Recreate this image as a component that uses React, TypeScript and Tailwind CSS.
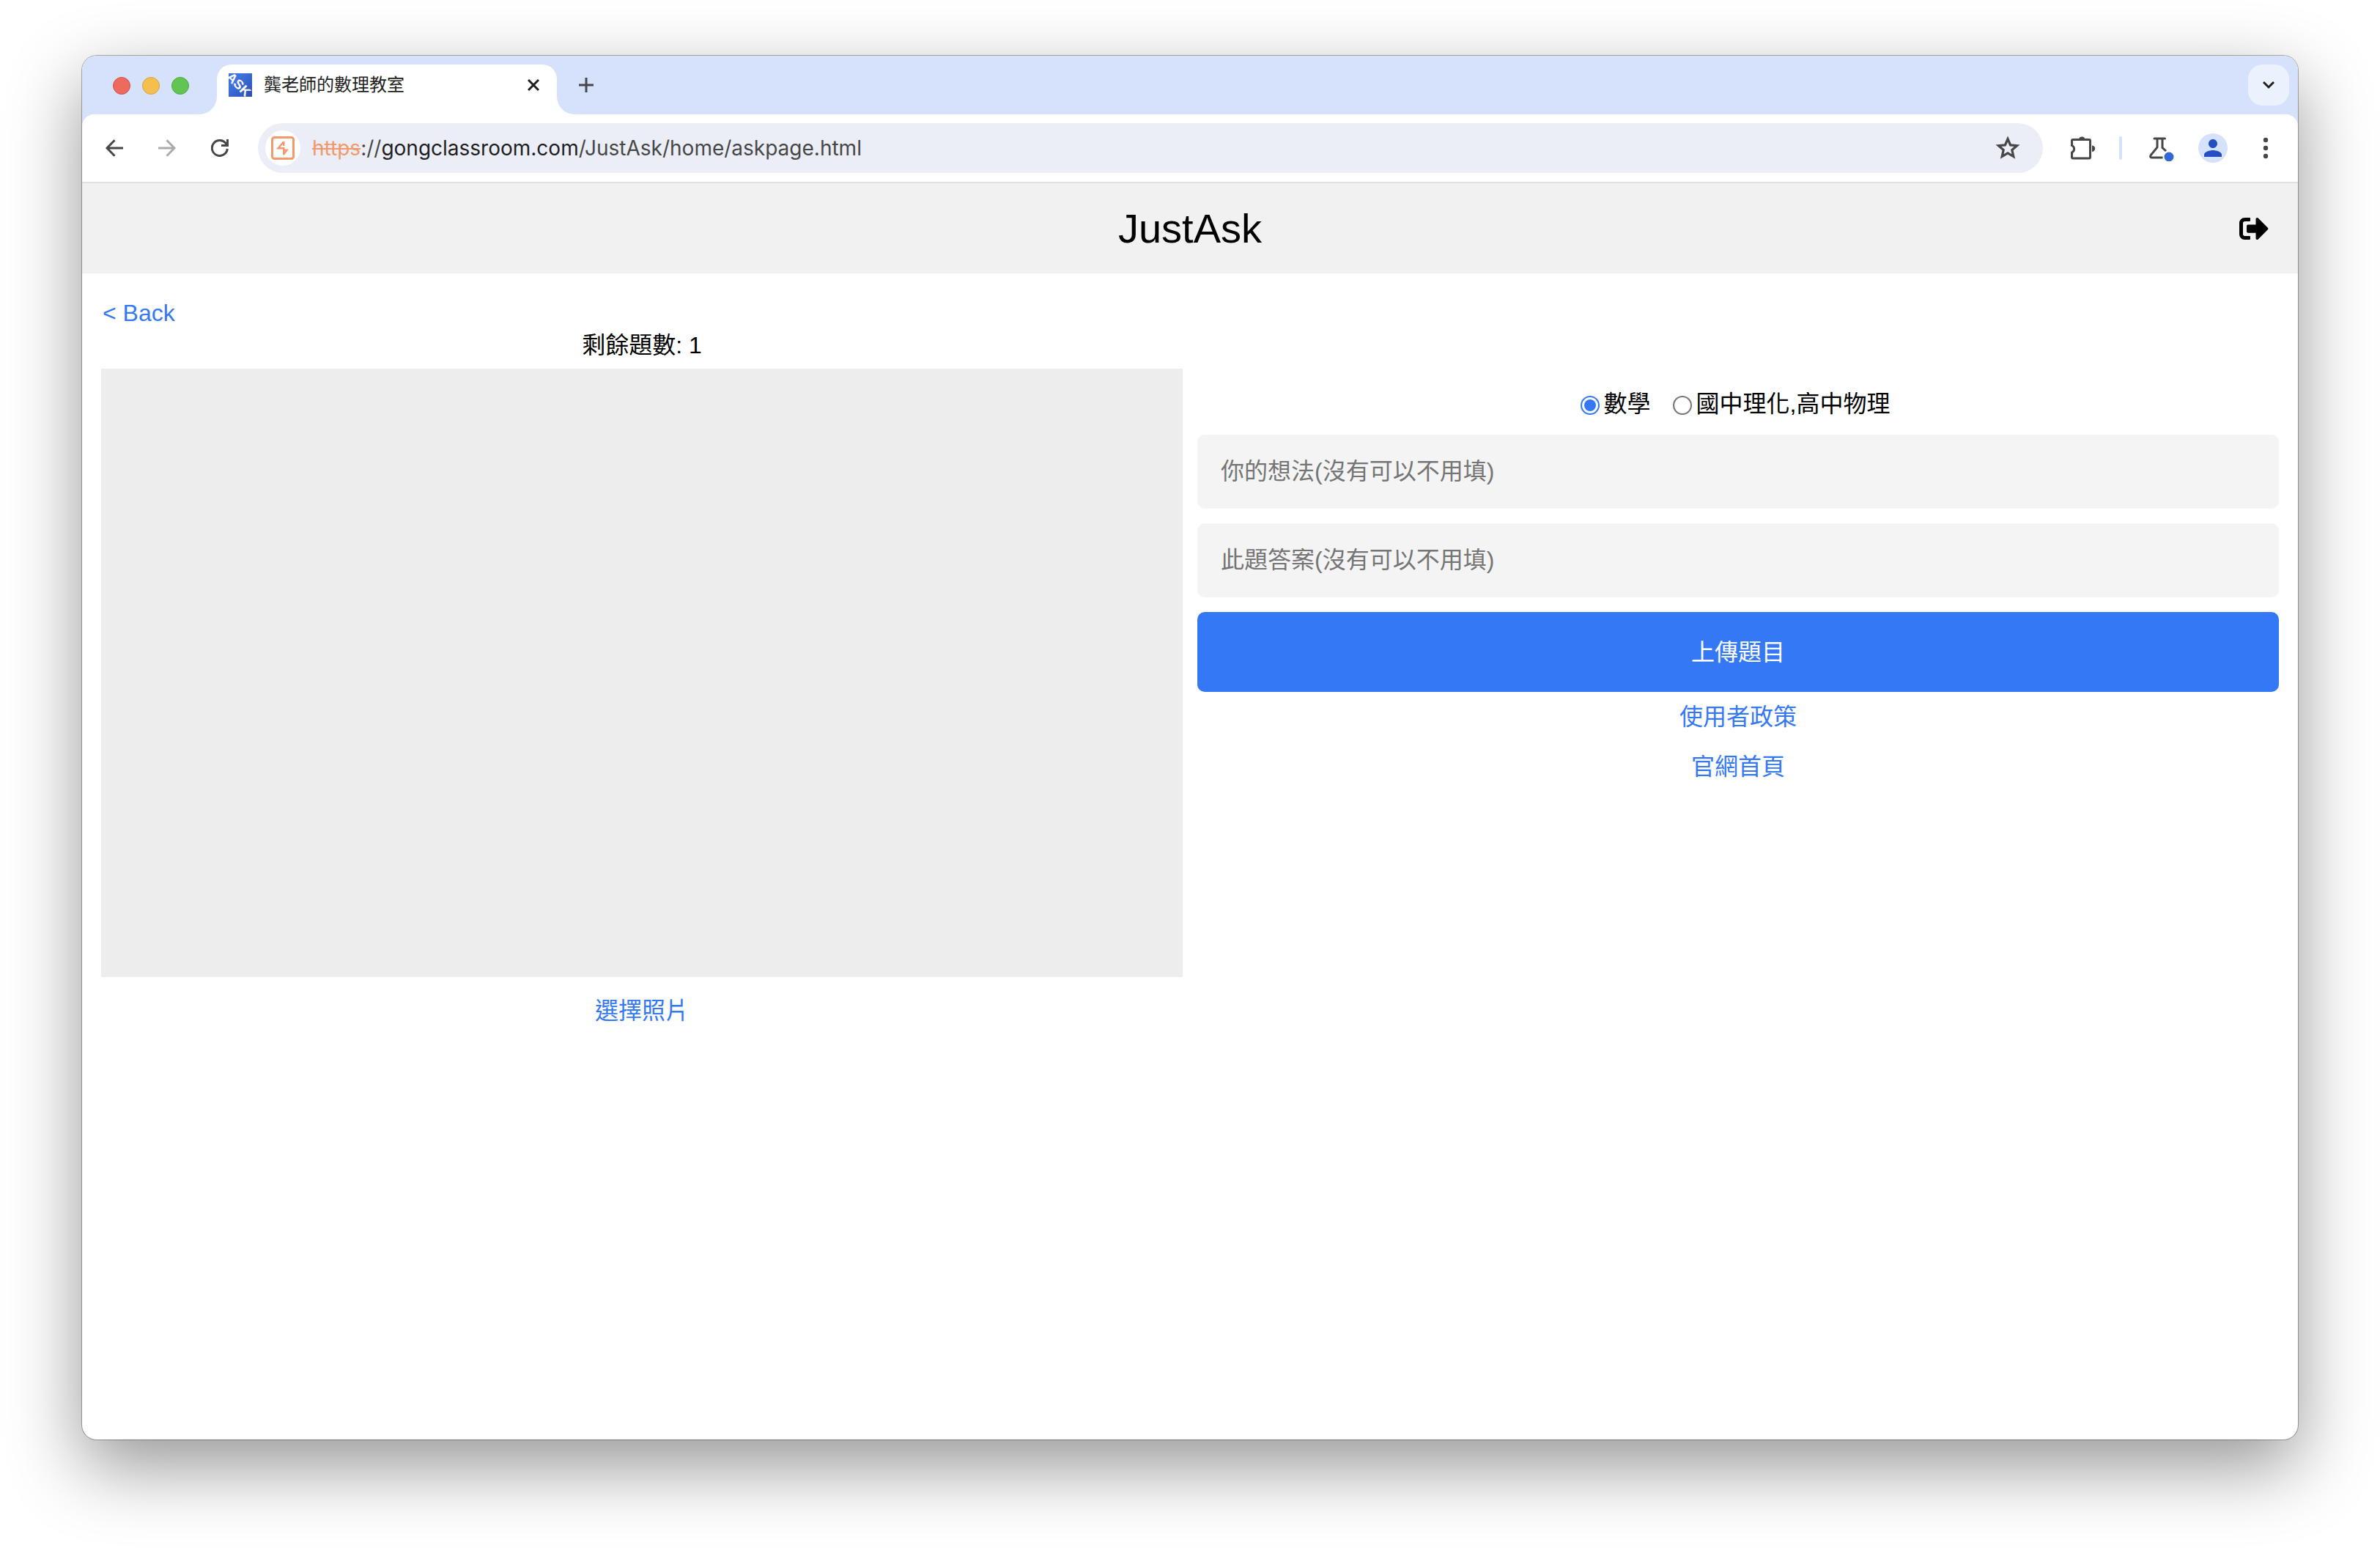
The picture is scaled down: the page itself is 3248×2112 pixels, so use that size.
import { useState } from "react";
import { FaSignOutAlt } from "react-icons/fa";
import { MdPerson } from "react-icons/md";

function Favicon() {
  return (
    <svg className="size-8 shrink-0" viewBox="0 0 32 32" aria-hidden="true">
      <defs>
        <linearGradient id="fav" x1="0" y1="0" x2="1" y2="1">
          <stop offset="0.3" stopColor="#3f72e0" />
          <stop offset="1" stopColor="#2a4fae" />
        </linearGradient>
      </defs>
      <rect width="32" height="32" fill="url(#fav)" />
      <text
        x="14"
        y="21.5"
        textAnchor="middle"
        transform="rotate(45 14 15)"
        fill="#fff"
        fontFamily="Liberation Sans, sans-serif"
        fontWeight="700"
        fontSize="18"
      >
        ASK
      </text>
    </svg>
  );
}

function SiteIcon() {
  return (
    <svg className="size-8" viewBox="0 0 32 32" fill="none" stroke="#f29a6e" aria-hidden="true">
      <rect x="1.5" y="1.5" width="29" height="29" rx="3" strokeWidth="3" />
      <path d="M17.2 7 V13 M17.2 7.5 L9.5 16.2 H17.2 V25.5 M17.2 24.5 L21.5 18.8 H17" strokeWidth="2.4" />
    </svg>
  );
}

function ArrowIcon({ flip = false }: { flip?: boolean }) {
  return (
    <svg className={flip ? "size-6 rotate-180" : "size-6"} viewBox="0 0 24 24" fill="none" stroke="currentColor" strokeWidth="3" aria-hidden="true">
      <path d="M24 12 H2.5 M12.5 1.2 L2 12 L12.5 22.8" />
    </svg>
  );
}

function ReloadIcon() {
  return (
    <svg className="size-6" viewBox="0 0 24 24" fill="none" stroke="currentColor" strokeWidth="3" aria-hidden="true">
      <path d="M22.3 13 A10.5 10.5 0 1 1 19.5 4.8 L22 8" />
      <path d="M22.5 0 V8.5 H14" />
    </svg>
  );
}

function StarIcon() {
  return (
    <svg className="size-10" viewBox="0 0 40 40" fill="none" stroke="#474747" strokeWidth="3.2" aria-hidden="true">
      <path d="M20 7.5 L23.6 15.9 L32.6 16.7 L25.8 22.6 L27.8 31.5 L20 26.8 L12.2 31.5 L14.2 22.6 L7.4 16.7 L16.4 15.9 Z" />
    </svg>
  );
}

function PuzzleIcon() {
  return (
    <svg className="size-9" viewBox="0 0 36 36" fill="#474747" aria-hidden="true">
      <path d="M13 6 a4.3 4.3 0 0 1 8.4 0 z M31 14.5 a4.2 4.2 0 0 1 0 8.4 z" />
      <path
        d="M5 6.500 h22 a1.500 1.500 0 0 1 1.500 1.500 v22.500 a1.500 1.500 0 0 1 -1.500 1.500 h-22 a1.500 1.500 0 0 1 -1.500 -1.500 v-6.500 a5.200 5.200 0 0 0 0 -9.500 v-6.500 a1.500 1.500 0 0 1 1.500 -1.500 z"
        fill="none"
        stroke="#474747"
        strokeWidth="3"
      />
    </svg>
  );
}

function FlaskIcon() {
  return (
    <svg className="size-9" viewBox="0 0 36 36" fill="none" stroke="#474747" strokeWidth="3" aria-hidden="true">
      <path d="M8 5 H22.5" strokeLinecap="round" />
      <path d="M12 5 V17 L3.3 27.500 Q1.500 31 4.500 31 H19.500 M19 5 V17.500 L24 22" />
      <circle cx="28" cy="30" r="6.500" fill="#3367d6" stroke="none" />
    </svg>
  );
}

function Tab() {
  return (
    <div className="relative mt-3 flex h-17 w-116 items-center rounded-t-[20px] bg-white pb-3 pl-4">
      <svg className="absolute bottom-0 -left-6 size-6" viewBox="0 0 24 24" fill="#fff" aria-hidden="true">
        <path d="M24 0 V24 H0 A24 24 0 0 0 24 0 Z" />
      </svg>
      <svg className="absolute bottom-0 -right-6 size-6" viewBox="0 0 24 24" fill="#fff" aria-hidden="true">
        <path d="M0 0 V24 H24 A24 24 0 0 1 0 0 Z" />
      </svg>
      <Favicon />
      <span className="ml-4 flex-1 text-[24px] leading-8 text-[#1f1f1f]">龔老師的數理教室</span>
      <button aria-label="Close tab" className="mr-6">
        <svg className="size-4" viewBox="0 0 16 16" stroke="#1f1f1f" strokeWidth="3" aria-hidden="true">
          <path d="M1 1 L15 15 M15 1 L1 15" />
        </svg>
      </button>
    </div>
  );
}

function Browser() {
  return (
    <>
      <div className="flex h-20 bg-[#d6e1fc]">
        <div className="mr-[38px] ml-[42px] flex items-center gap-4 pt-[2px]">
          <span className="size-6 rounded-full border border-[#d25047] bg-[#ed6a5e]" />
          <span className="size-6 rounded-full border border-[#d9a13c] bg-[#f5bf4f]" />
          <span className="size-6 rounded-full border border-[#4fa73d] bg-[#61c554]" />
        </div>
        <Tab />
        <button aria-label="New tab" className="ml-7 flex w-6 items-center justify-center">
          <svg className="size-6" viewBox="0 0 24 24" stroke="#474747" strokeWidth="3" aria-hidden="true">
            <path d="M12 2 V22 M2 12 H22" />
          </svg>
        </button>
        <button aria-label="Search tabs" className="mt-3 mr-3 ml-auto flex size-14 items-center justify-center rounded-[20px] bg-[#ebf2fd]">
          <svg className="size-4" viewBox="0 0 16 16" fill="none" stroke="#1f1f1f" strokeWidth="3" aria-hidden="true">
            <path d="M1 4 L8 11 L15 4" />
          </svg>
        </button>
      </div>
      <div className="bg-[#d6e1fc]">
        <div className="flex h-[94px] items-center rounded-t-[16px] border-b-2 border-[#e1e1e1] bg-white pl-8">
          <button aria-label="Back" className="text-[#474747]"><ArrowIcon /></button>
          <button aria-label="Forward" className="ml-12 text-[#ababab]"><ArrowIcon flip /></button>
          <button aria-label="Reload" className="ml-12 text-[#474747]"><ReloadIcon /></button>
          <div className="ml-10 flex h-17 flex-1 items-center rounded-full bg-[#ebeef7] px-[10px]">
            <span className="flex size-12 items-center justify-center rounded-full bg-white"><SiteIcon /></span>
            <span className="ml-4 flex-1 font-['Inter'] text-[28px] leading-9 text-[#474747]">
              <span className="text-[#f29a6e] line-through">https</span>://<span className="text-[#1f1f1f]">gongclassroom.com</span>/JustAsk/home/askpage.html
            </span>
            <button aria-label="Bookmark" className="mr-[18px]"><StarIcon /></button>
          </div>
          <button aria-label="Extensions" className="ml-9"><PuzzleIcon /></button>
          <span className="ml-8 h-8 w-1 rounded-full bg-[#d6e1fc]" />
          <button aria-label="Labs" className="ml-9"><FlaskIcon /></button>
          <button aria-label="Profile" className="ml-8 flex size-10 items-center justify-center rounded-full bg-[#d6e1fc] text-[#2250c4]">
            <MdPerson className="size-9" />
          </button>
          <button aria-label="Menu" className="mr-6 ml-8">
            <svg className="size-10" viewBox="0 0 40 40" fill="#474747" aria-hidden="true">
              <circle cx="20" cy="9" r="3.2" />
              <circle cx="20" cy="20" r="3.2" />
              <circle cx="20" cy="31" r="3.2" />
            </svg>
          </button>
        </div>
      </div>
    </>
  );
}

function Field({ label }: { label: string }) {
  return (
    <input
      type="text"
      aria-label={label}
      placeholder={label}
      className="mb-5 h-[101px] w-full rounded-[10px] bg-[#f4f4f4] px-8 placeholder:text-[#757575]"
    />
  );
}

const subjects = ["數學", "國中理化,高中物理"];

export default function App() {
  const [subject, setSubject] = useState(subjects[0]);
  return (
    <div className="flex min-h-screen flex-col bg-white px-28 pt-[76px] pb-[148px] font-['Liberation_Sans','Noto_Sans_CJK_TC',sans-serif]">
      <div className="flex flex-1 flex-col overflow-hidden rounded-[20px] bg-white shadow-[0_0_0_1px_rgba(0,0,0,0.3),0_36px_100px_rgba(0,0,0,0.42)]">
        <Browser />
        <header className="grid h-[123px] grid-cols-[1fr_auto_1fr] items-center bg-[#f1f1f1] px-10 text-black">
          <h1 className="col-start-2 text-[56px] leading-16">JustAsk</h1>
          <button aria-label="Sign out" className="justify-self-end"><FaSignOutAlt className="size-10" /></button>
        </header>
        <main className="px-[26px] pt-8 text-[32px] leading-11 text-black">
          <a href="#back" className="px-[2px] text-[#3478f6]">&lt; Back</a>
          <div className="grid grid-cols-2 gap-5">
            <section className="flex flex-col items-center">
              <p>剩餘題數: 1</p>
              <div className="mt-[10px] h-[830px] w-full bg-[#ededed]" />
              <button className="mt-6 text-[#3478f6]">選擇照片</button>
            </section>
            <section className="flex flex-col items-center pt-20">
              <div className="mb-5 flex gap-[30px] pr-2">
                {subjects.map((name) => (
                  <label key={name} className="flex items-center gap-[6px]">
                    <input
                      type="radio"
                      name="subject"
                      checked={subject === name}
                      onChange={() => setSubject(name)}
                      className="mt-1 size-[26px] appearance-none rounded-full border-2 border-[#767676] bg-white bg-clip-content p-[3px] checked:border-[#3478f6] checked:bg-[#3478f6]"
                    />
                    {name}
                  </label>
                ))}
              </div>
              <Field label="你的想法(沒有可以不用填)" />
              <Field label="此題答案(沒有可以不用填)" />
              <button className="h-[109px] w-full rounded-[10px] bg-[#3478f6] text-white">上傳題目</button>
              <a href="#policy" className="mt-3 text-[#3478f6]">使用者政策</a>
              <a href="#home" className="mt-6 text-[#3478f6]">官網首頁</a>
            </section>
          </div>
        </main>
      </div>
    </div>
  );
}
